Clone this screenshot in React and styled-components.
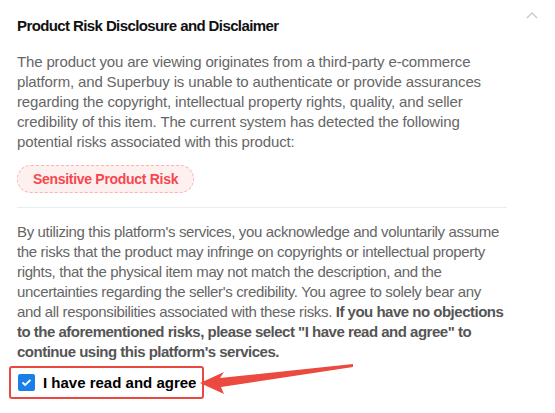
import React from 'react';
import styled, { createGlobalStyle } from 'styled-components';

const GlobalStyle = createGlobalStyle`
  html, body {
    margin: 0;
    padding: 0;
    background: #ffffff;
  }
  body {
    font-family: "Liberation Sans", Arial, sans-serif;
  }
`;

const Panel = styled.div`
  position: relative;
  width: 555px;
  height: 413px;
  box-sizing: border-box;
  padding: 16px 0 0 17px;
  overflow: hidden;
`;

const HeaderRow = styled.div`
  display: flex;
  justify-content: space-between;
  align-items: flex-start;
  width: 521px;
`;

const Title = styled.h3`
  margin: 0;
  font-size: 15px;
  line-height: 20px;
  font-weight: 700;
  letter-spacing: -0.6px;
  color: #111;
`;

const Chevron = styled.svg`
  margin-top: -5px;
`;

const Body = styled.div`
  width: 496px;
`;

const Paragraph = styled.p`
  margin: ${(p) => p.$top || 0}px 0 0;
  font-size: 15px;
  line-height: 20px;
  letter-spacing: ${(p) => p.$spacing}px;
  color: #666;
  b {
    color: #555;
    letter-spacing: -0.5px;
  }
`;

const Tag = styled.span`
  display: inline-flex;
  align-items: center;
  height: 28px;
  box-sizing: border-box;
  margin-top: 13px;
  padding: 0 15px;
  border: 1px dashed #fbb4b4;
  border-radius: 14px;
  background: #fff0f0;
  color: #f5474f;
  font-size: 14px;
  font-weight: 700;
  letter-spacing: -0.3px;
`;

const Divider = styled.div`
  height: 1px;
  width: 490px;
  background: #ececec;
  margin-top: 14px;
`;

const AgreeBox = styled.label`
  display: inline-flex;
  align-items: center;
  gap: 8px;
  margin: 4px 0 0 -8px;
  padding: 6px 6px 6px 7px;
  border: 2px solid #e8483f;
  border-radius: 3px;
  cursor: pointer;
`;

const Check = styled.span`
  display: inline-flex;
  align-items: center;
  justify-content: center;
  width: 17px;
  height: 17px;
  border-radius: 2px;
  background: #1a80e8;
`;

const AgreeText = styled.span`
  font-size: 15px;
  font-weight: 700;
  color: #000;
`;

const Arrow = styled.svg`
  position: absolute;
  left: 0;
  top: 0;
  pointer-events: none;
`;

export default function App() {
  return (
    <>
      <GlobalStyle />
      <Panel>
        <HeaderRow>
          <Title>Product Risk Disclosure and Disclaimer</Title>
          <Chevron width="12" height="8" viewBox="0 0 12 8">
            <path d="M1 7 L6 2 L11 7" fill="none" stroke="#c8c8c8" strokeWidth="1.3" />
          </Chevron>
        </HeaderRow>
        <Body>
          <Paragraph $top={16} $spacing={-0.15}>
            The product you are viewing originates from a third-party e-commerce platform, and
            Superbuy is unable to authenticate or provide assurances regarding the copyright,
            intellectual property rights, quality, and seller credibility of this item. The current
            system has detected the following potential risks associated with this product:
          </Paragraph>
          <Tag>Sensitive Product Risk</Tag>
          <Divider />
          <Paragraph $top={14} $spacing={-0.35}>
            By utilizing this platform's services, you acknowledge and voluntarily assume the risks
            that the product may infringe on copyrights or intellectual property rights, that the
            physical item may not match the description, and the uncertainties regarding the
            seller's credibility. You agree to solely bear any
            <br />
            and all responsibilities associated with these risks.{' '}
            <b>
              If you have no objections to the aforementioned risks, please select "I have read and
              agree" to continue using this platform's services.
            </b>
          </Paragraph>
          <AgreeBox>
            <Check>
              <svg width="11" height="9" viewBox="0 0 11 9">
                <path d="M1.5 4.5 L4.2 7 L9.5 1.8" fill="none" stroke="#fff" strokeWidth="1.8" />
              </svg>
            </Check>
            <AgreeText>I have read and agree</AgreeText>
          </AgreeBox>
        </Body>
        <Arrow width="555" height="413" viewBox="0 0 555 413">
          <polygon
            points="200,383 224,372 220,378 353,364 353,367 221,387 224,394"
            fill="#ea4a3f"
          />
        </Arrow>
      </Panel>
    </>
  );
}
